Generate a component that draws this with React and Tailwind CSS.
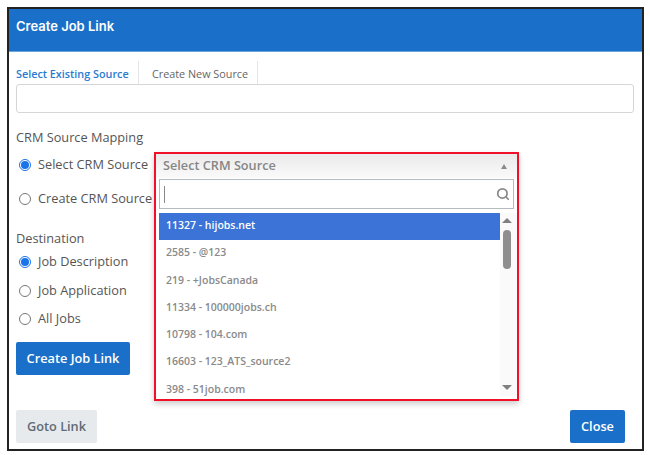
import { Search } from "lucide-react";

const sources = [
  "11327 - hijobs.net",
  "2585 - @123",
  "219 - +JobsCanada",
  "11334 - 100000jobs.ch",
  "10798 - 104.com",
  "16603 - 123_ATS_source2",
  "398 - 51job.com",
];

function Radio({ label, checked, className = "" }) {
  return (
    <div className={`flex items-center text-[12.75px] text-[#555] ${className}`}>
      {checked ? (
        <span className="ml-[3px] w-[12px] h-[12px] rounded-full border border-[#1a73e8] flex items-center justify-center">
          <span className="w-[8px] h-[8px] rounded-full bg-[#1a73e8]" />
        </span>
      ) : (
        <span className="ml-[3px] w-[12px] h-[12px] rounded-full border border-[#777] bg-white" />
      )}
      <span className="ml-[7px] whitespace-nowrap">{label}</span>
    </div>
  );
}

export default function App() {
  return (
    <div className="w-[650px] h-[455px] bg-white pt-[7px] pl-[7px] font-['Open_Sans',sans-serif]">
      <div className="relative w-[637px] h-[444px] border-2 border-[#222] bg-white flex flex-col">
        <div className="h-[43px] shrink-0 bg-[#1a70c8] border-b border-[#6ba5dc] pl-[7px] pt-[8px] text-[13px] leading-[18px] font-semibold text-white font-['Inter',sans-serif]">
          Create Job Link
        </div>

        <div className="px-[7px] flex-1 flex flex-col">
          <div className="flex h-[23px] mt-[9px] text-[10.8px] leading-[26px]">
            <div className="w-[123px] border-r border-[#e3e6e8] font-semibold text-[#2a7bd0]">Select Existing Source</div>
            <div className="w-[119px] pl-[13px] border-r border-[#e3e6e8] text-[#666]">Create New Source</div>
          </div>
          <div className="h-[29px] w-[618px] border border-[#d4d6d8] rounded-[3px]" />

          <div className="mt-[14px] text-[12.75px] leading-[20px] text-[#555]">CRM Source Mapping</div>
          <Radio label="Select CRM Source" checked className="mt-[8px] h-[20px]" />
          <Radio label="Create CRM Source" className="mt-[14px] h-[20px]" />

          <div className="mt-[19px] text-[12.75px] leading-[20px] text-[#555]">Destination</div>
          <Radio label="Job Description" checked className="mt-[4px] h-[20px]" />
          <Radio label="Job Application" className="mt-[9px] h-[20px]" />
          <Radio label="All Jobs" className="mt-[8px] h-[20px]" />

          <button className="mt-[13px] w-[114px] h-[33px] pt-px rounded-[2px] bg-[#1a70c8] text-[12.75px] font-semibold text-white">
            Create Job Link
          </button>

          <div className="mt-auto mb-[6px] flex items-center justify-between pr-[10px]">
            <button className="w-[81px] h-[33px] pt-px rounded-[2px] bg-[#e7eaed] text-[12.75px] font-semibold text-[#5f6b76]">
              Goto Link
            </button>
            <button className="w-[55px] h-[33px] pt-px rounded-[2px] bg-[#1a70c8] text-[12.75px] font-semibold text-white">
              Close
            </button>
          </div>
        </div>

        {/* Open dropdown */}
        <div className="absolute left-[145px] top-[143px] w-[365px] h-[249px] border-2 border-[#f0102a] bg-white shadow-[0_3px_6px_rgba(0,0,0,0.2)] flex flex-col">
          <div className="h-[24px] shrink-0 flex items-center justify-between pl-[7px] pr-[10px] bg-gradient-to-b from-[#eaeaea] to-[#fafafa] text-[12.7px] font-semibold text-[#868686]">
            <span>Select CRM Source</span>
            <span className="w-0 h-0 border-x-[3.5px] border-x-transparent border-b-[5px] border-b-[#8a8a8a]" />
          </div>
          <div className="mx-[3px] mt-[1px] h-[30px] shrink-0 border border-[#b4bcc0] flex items-center justify-between pl-[4px] pr-[3px]">
            <span className="w-px h-[17px] bg-[#888]" />
            <Search size={14} strokeWidth={3} className="text-[#8a8a8a]" />
          </div>
          <div className="flex-1 flex mt-[4px] pl-[3px] min-h-0">
            <div className="w-[342px] overflow-hidden">
              {sources.map((s, i) => (
                <div
                  key={s}
                  className={`h-[27.3px] pl-[7px] text-[10.5px] font-semibold leading-[25px] ${i === 0 ? "bg-[#3b74d6] text-white" : "text-[#8a8a8a]"}`}
                >
                  {s}
                </div>
              ))}
            </div>
            <div className="w-[17px] mb-[3px] pr-[3px] bg-[#fafafa] flex flex-col items-center">
              <span className="mt-[5px] w-0 h-0 border-x-[5px] border-x-transparent border-b-[5px] border-b-[#808080]" />
              <span className="mt-[7px] w-[8px] h-[39px] rounded-full bg-[#8e8e8e]" />
              <span className="mt-auto mb-[6px] w-0 h-0 border-x-[5px] border-x-transparent border-t-[5px] border-t-[#808080]" />
            </div>
          </div>
        </div>
      </div>
    </div>
  );
}
